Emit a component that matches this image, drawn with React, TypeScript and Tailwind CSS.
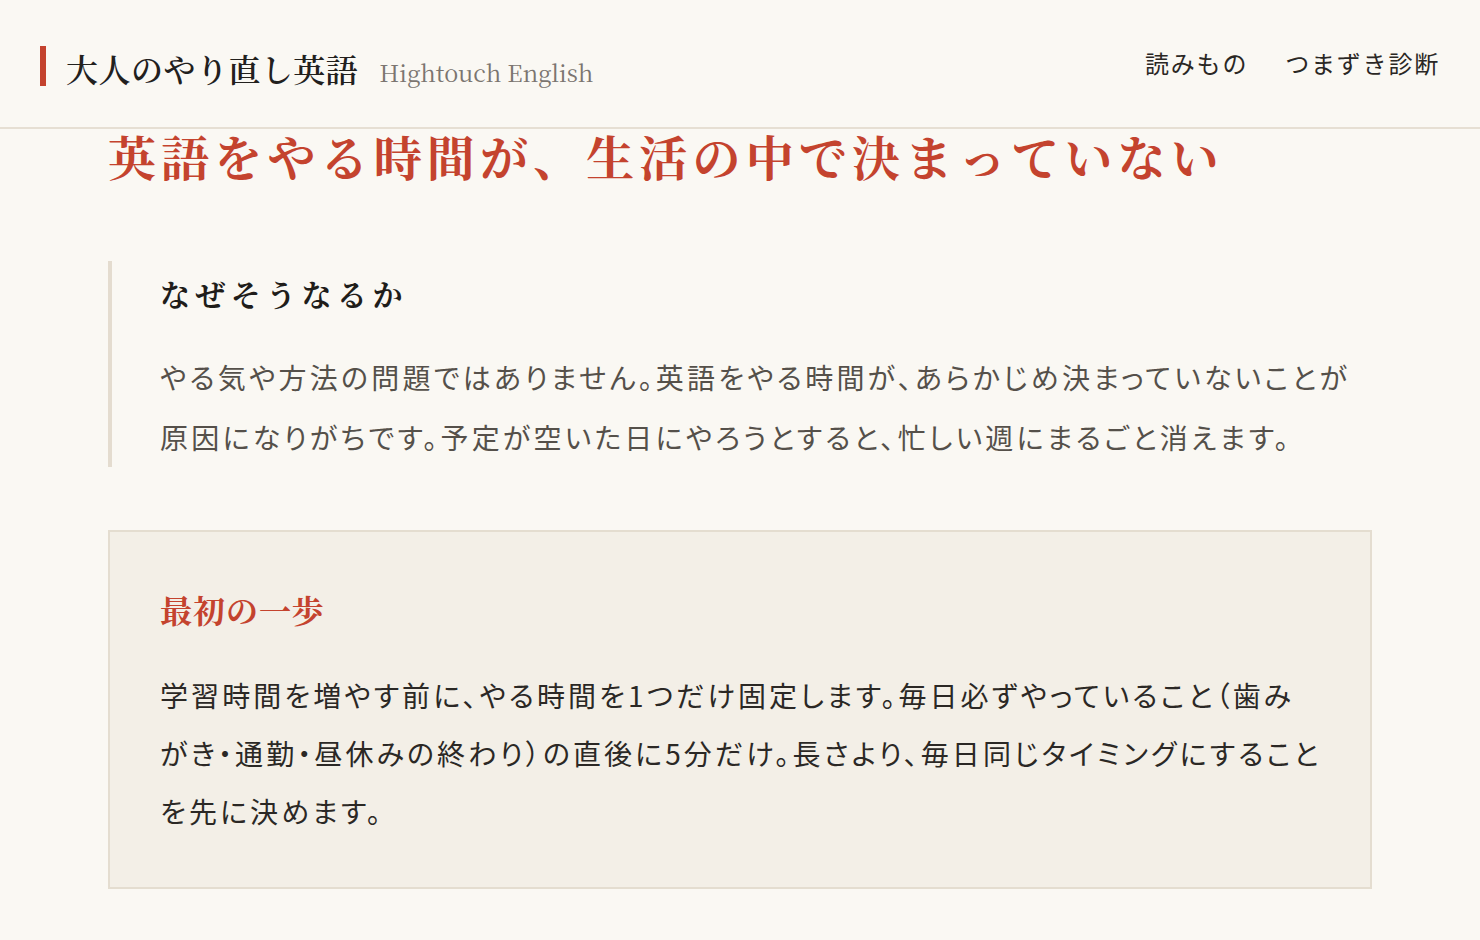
import React from "react";

const serif = '"Noto Serif CJK JP", "Noto Serif JP", "Liberation Serif", serif';
const sans = '"Noto Sans CJK JP", "Noto Sans", sans-serif';

function Header() {
  return (
    <header className="flex h-[129px] items-start justify-between border-b-2 border-[#e6dfd3] px-10">
      <div className="mt-[46px] flex items-center">
        <span className="h-10 w-[6px] bg-[#c4432e]" />
        <div className="ml-[20px] flex items-baseline pt-[4px]">
          <span
            className="text-[32px] font-semibold leading-none tracking-[0.015em] text-[#22201d]"
            style={{ fontFamily: serif }}
          >
            大人のやり直し英語
          </span>
          <span
            className="ml-[21px] text-[23.5px] leading-none text-[#7b7570]"
            style={{ fontFamily: serif }}
          >
            Hightouch English
          </span>
        </div>
      </div>
      <nav
        className="mt-[51px] flex gap-[37px] text-[24px] leading-none tracking-[0.075em] text-[#2a2724]"
        style={{ fontFamily: sans }}
      >
        <a>読みもの</a>
        <a>つまずき診断</a>
      </nav>
    </header>
  );
}

export default function App() {
  return (
    <div className="min-h-[940px] bg-[#faf8f3]">
      <Header />
      <main className="pl-[108px] pr-[108px]">
        <h1
          className="text-[48px] font-bold leading-[54px] tracking-[0.107em] text-[#c4432e]"
          style={{ fontFamily: serif }}
        >
          英語をやる時間が、生活の中で決まっていない
        </h1>

        <section className="mt-[78px] border-l-4 border-[#e4dccf] pl-[48px] pt-[14px]">
          <h2
            className="text-[30px] font-bold leading-[36px] tracking-[0.18em] text-[#1f1d1a]"
            style={{ fontFamily: serif }}
          >
            なぜそうなるか
          </h2>
          <p
            className="mt-[36px] text-[28px] leading-[60px] tracking-[0.115em] text-[#55504a]"
            style={{ fontFamily: sans, fontFeatureSettings: '"palt"' }}
          >
            やる気や方法の問題ではありません。英語をやる時間が、あらかじめ決まっていないことが原因になりがちです。予定が空いた日にやろうとすると、忙しい週にまるごと消えます。
          </p>
        </section>

        <section className="mt-[63px] border-2 border-[#e4ddd0] bg-[#f3efe7] pl-[50px] pr-[47px] pt-[57px] pb-[47px]">
          <h2
            className="text-[32px] font-bold leading-[40px] tracking-[0.03em] text-[#c4432e]"
            style={{ fontFamily: serif }}
          >
            最初の一歩
          </h2>
          <p
            className="mt-[37px] text-[28px] leading-[58px] tracking-[0.11em] text-[#2b2825]"
            style={{ fontFamily: sans, fontFeatureSettings: '"palt"' }}
          >
            学習時間を増やす前に、やる時間を1つだけ固定します。毎日必ずやっていること（歯みがき・通勤・昼休みの終わり）の直後に5分だけ。長さより、毎日同じタイミングにすることを先に決めます。
          </p>
        </section>
      </main>
    </div>
  );
}
